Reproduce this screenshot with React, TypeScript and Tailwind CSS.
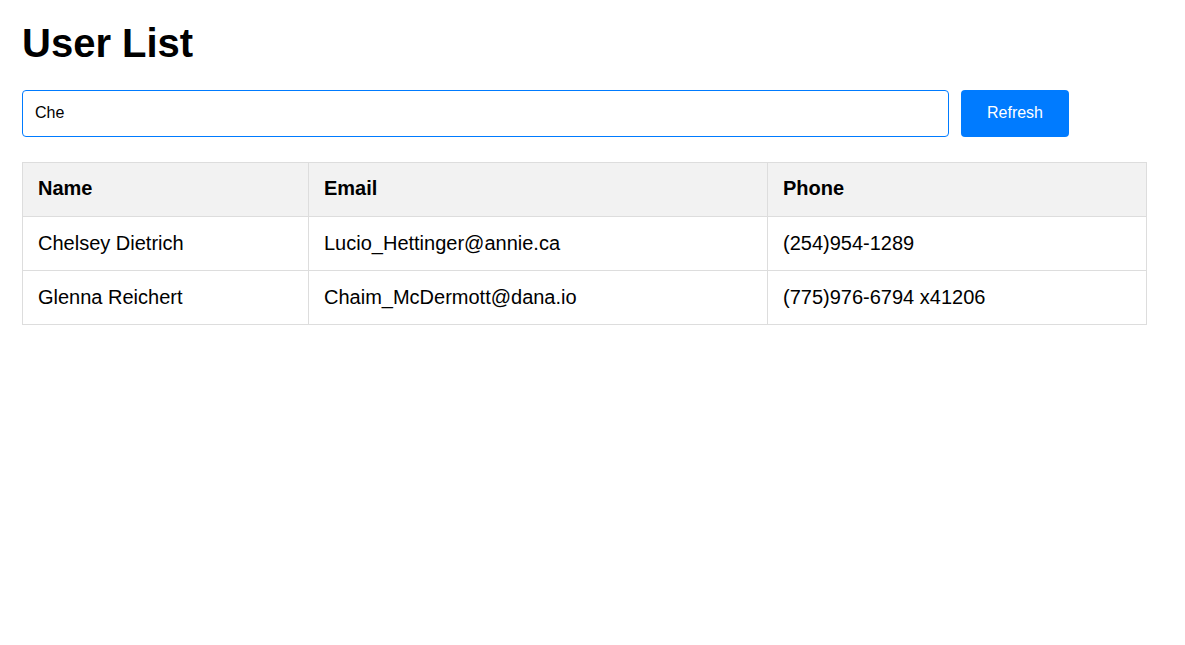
import React, { useState } from "react";

const users = [
  { name: "Chelsey Dietrich", email: "Lucio_Hettinger@annie.ca", phone: "(254)954-1289" },
  { name: "Glenna Reichert", email: "Chaim_McDermott@dana.io", phone: "(775)976-6794 x41206" },
];

const App = () => {
  const [query, setQuery] = useState("Che");

  return (
    <div className="min-h-screen bg-white px-[22px] pt-[19px] text-black font-['Liberation_Sans',Arial,sans-serif]">
      <h1 className="text-[40px] leading-[48px] font-bold">User List</h1>

      <div className="mt-[23px] flex items-center gap-[12px]">
        <input
          type="text"
          value={query}
          onChange={(e) => setQuery(e.target.value)}
          className="h-[47px] w-[927px] rounded-[4px] border border-[#007bff] px-[12px] pb-[2px] text-[16px] text-black outline-none"
        />
        <button className="h-[47px] w-[108px] rounded-[4px] bg-[#007bff] pb-[2px] text-[16px] text-white">
          Refresh
        </button>
      </div>

      <table className="mt-[25px] w-[1125px] border-collapse text-[20px]">
        <thead>
          <tr className="h-[54px] bg-[#f2f2f2]">
            <th className="w-[286px] border border-[#dddddd] px-[15px] pb-[3px] text-left font-bold">Name</th>
            <th className="w-[459px] border border-[#dddddd] px-[15px] pb-[3px] text-left font-bold">Email</th>
            <th className="border border-[#dddddd] px-[15px] pb-[3px] text-left font-bold">Phone</th>
          </tr>
        </thead>
        <tbody>
          {users.map((u) => (
            <tr key={u.email} className="h-[54px]">
              <td className="border border-[#dddddd] px-[15px] pb-[2px]">{u.name}</td>
              <td className="border border-[#dddddd] px-[15px] pb-[2px]">{u.email}</td>
              <td className="border border-[#dddddd] px-[15px] pb-[2px]">{u.phone}</td>
            </tr>
          ))}
        </tbody>
      </table>
    </div>
  );
};

export default App;
